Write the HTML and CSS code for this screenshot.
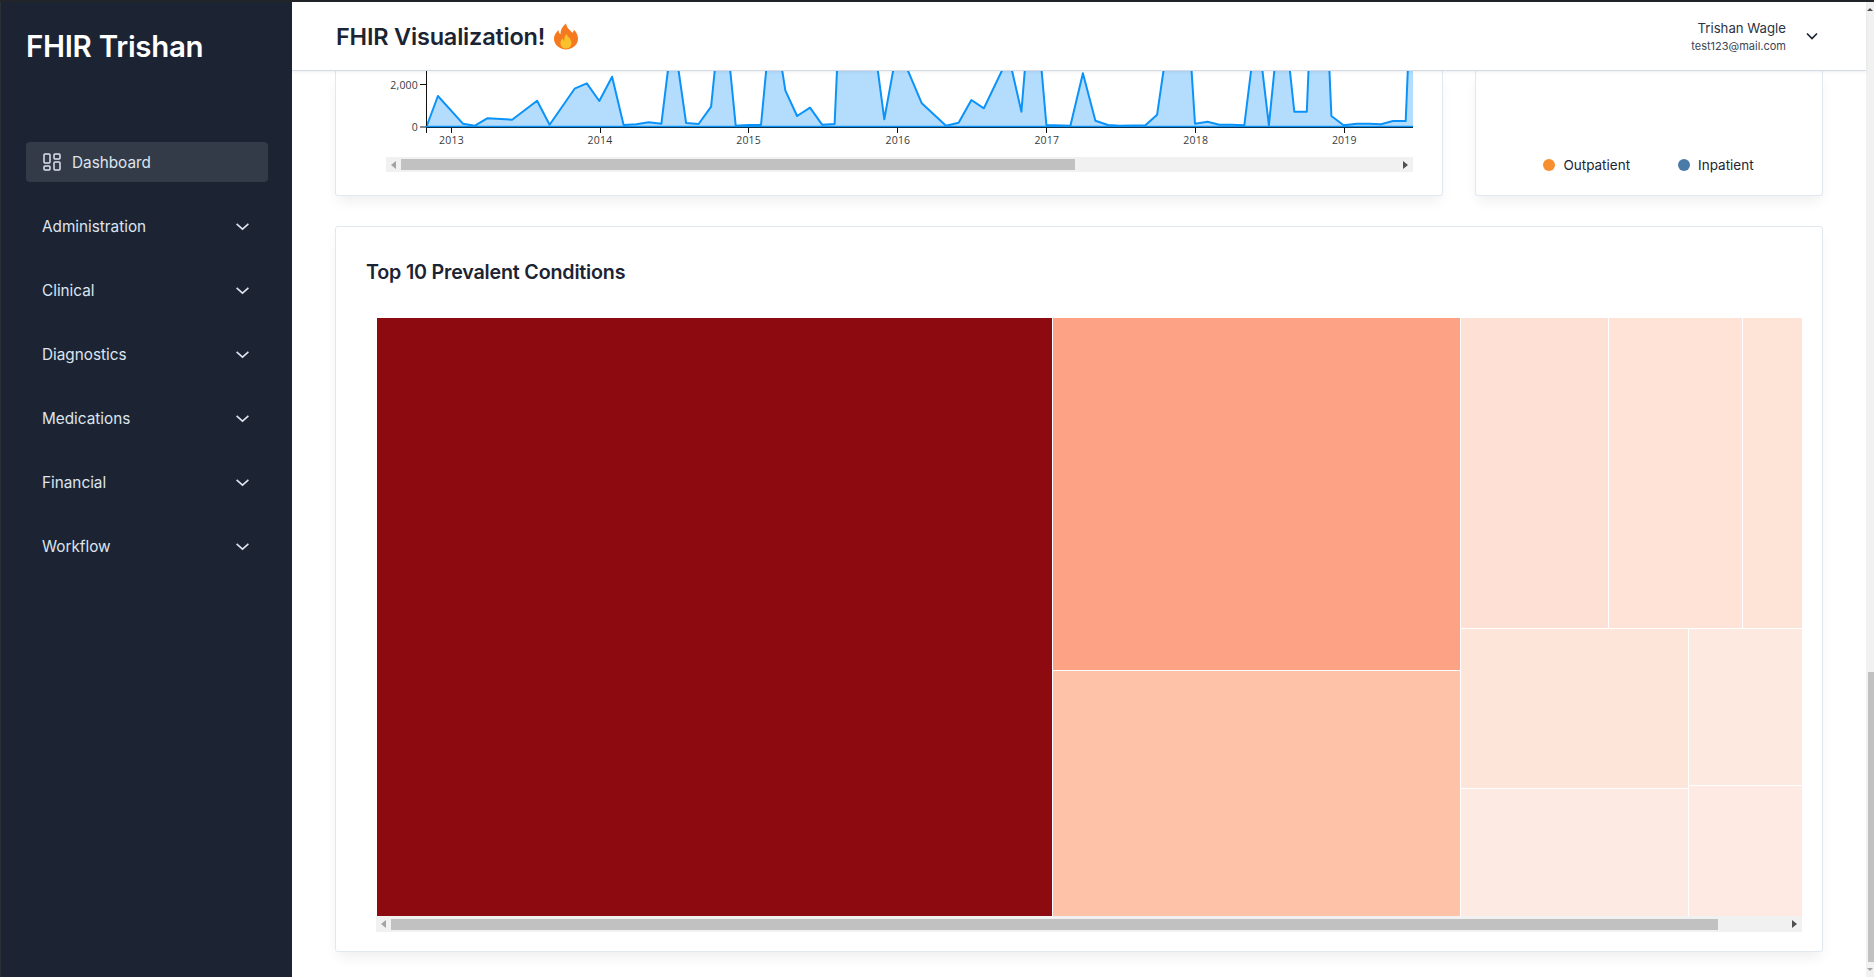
FILE: index.html
```html
<!DOCTYPE html>
<html>
<head>
  <title>FHIR Trishan</title>
  <link rel="stylesheet" href="styles.css">
</head>
<body>
  <div class="topline"></div>
  <div class="app">
    <aside class="sidebar">
      <div class="logo">FHIR Trishan</div>
      <nav class="nav">
        <a class="nav-item active">
          <svg class="nav-icon" viewBox="0 0 18 18" width="18" height="18" fill="none" stroke="#dee4ee" stroke-width="1.5">
            <rect x="1" y="1" width="6" height="9" rx="1"/>
            <rect x="11" y="1" width="6" height="5" rx="1"/>
            <rect x="1" y="13" width="6" height="4" rx="1"/>
            <rect x="11" y="9" width="6" height="8" rx="1"/>
          </svg>
          Dashboard
        </a>
        <a class="nav-item">Administration
          <svg class="chev" viewBox="0 0 14 14" width="15" height="15" fill="none" stroke="#dee4ee" stroke-width="1.500"><path d="M1.500 4.500l5.500 5 5.500-5"/></svg>
        </a>
        <a class="nav-item">Clinical
          <svg class="chev" viewBox="0 0 14 14" width="15" height="15" fill="none" stroke="#dee4ee" stroke-width="1.500"><path d="M1.500 4.500l5.500 5 5.500-5"/></svg>
        </a>
        <a class="nav-item">Diagnostics
          <svg class="chev" viewBox="0 0 14 14" width="15" height="15" fill="none" stroke="#dee4ee" stroke-width="1.500"><path d="M1.500 4.500l5.500 5 5.500-5"/></svg>
        </a>
        <a class="nav-item">Medications
          <svg class="chev" viewBox="0 0 14 14" width="15" height="15" fill="none" stroke="#dee4ee" stroke-width="1.500"><path d="M1.500 4.500l5.500 5 5.500-5"/></svg>
        </a>
        <a class="nav-item">Financial
          <svg class="chev" viewBox="0 0 14 14" width="15" height="15" fill="none" stroke="#dee4ee" stroke-width="1.500"><path d="M1.500 4.500l5.500 5 5.500-5"/></svg>
        </a>
        <a class="nav-item">Workflow
          <svg class="chev" viewBox="0 0 14 14" width="15" height="15" fill="none" stroke="#dee4ee" stroke-width="1.500"><path d="M1.500 4.500l5.500 5 5.500-5"/></svg>
        </a>
      </nav>
    </aside>

    <div class="main">
      <header class="header">
        <h1 class="page-title">FHIR Visualization!</h1>
        <svg class="flame" viewBox="0 0 26 28" width="24" height="27">
          <path d="M13 0c1 5 4 7 7 10 1-1 1.500-2 1.500-3.500C24.500 10 26 13 26 16.500 26 23 20 28 13 28S0 23 0 16.500C0 12 3 9 5 7c0 2 .5 3.500 2 4.500C7 7 9 3 13 0z" fill="#f4791f"/>
          <path d="M13.500 11c.5 3 5.500 5 5.500 10 0 3.500-2.700 6-6 6s-6-2.500-6-6c0-2.500 1.500-4 2.500-5 .2 1.300.7 2 1.500 2.500 0-3 1-5.500 2.500-7.500z" fill="#fbc02d"/>
        </svg>
        <div class="user">
          <div class="user-text">
            <div class="user-name">Trishan Wagle</div>
            <div class="user-mail">test123@mail.com</div>
          </div>
          <svg class="user-chev" viewBox="0 0 14 14" width="14" height="14" fill="none" stroke="#1c2434" stroke-width="1.700"><path d="M2 4.500l5 5 5-5"/></svg>
        </div>
      </header>

      <div class="content">
        <div class="row">
          <section class="card chart-card">
            <svg class="area-chart" viewBox="336 71 1106 86" width="1106" height="86">
              <polygon class="area" points="426.400,127 437.900,96 462.900,123.700 475,125.700 487.100,118.300 512.100,119.700 537.100,100.700 549.600,124.700 574.600,88.700 586.800,83.300 599.300,101 612.100,76.700 623.600,125 636.400,124.300 648.600,122.300 661.400,123.700 668.200,68 678.200,68 686.100,123 698.600,124 711.100,106.700 715,68 730,68 735.700,125.700 748.600,125 761,125 766.400,68 781.800,68 785.400,90.700 797.100,116 810,107.700 822.100,124.700 834.600,124 837.100,68 877.500,68 884.300,119.300 893.600,68 906.800,68 921.800,103.300 946,125.700 958.600,122.700 971.400,100 983.900,108.300 1003.200,68 1011.400,68 1021.400,111.700 1025,68 1041.400,68 1046.400,125 1070.400,125.700 1082.900,73.300 1095.400,120.700 1107.900,125 1120,125.700 1145.400,125.300 1157.100,114.700 1163.900,68 1191.400,68 1195,123.700 1207.500,121.700 1219.300,124.700 1231.800,124.700 1244.300,125.300 1251.400,68 1262.100,68 1268.900,125.300 1274.600,68 1289.600,68 1294.300,111.700 1306.800,111.700 1308.600,68 1329.300,68 1331.400,116 1343.600,125.300 1356.800,123.700 1369.300,123.700 1381,124.300 1392.900,121 1405.700,121 1407.900,68 1413,68 1413,127"/>
              <polyline class="line" points="426.400,127 437.900,96 462.900,123.700 475,125.700 487.100,118.300 512.100,119.700 537.100,100.700 549.600,124.700 574.600,88.700 586.800,83.300 599.300,101 612.100,76.700 623.600,125 636.400,124.300 648.600,122.300 661.400,123.700 668.200,68 678.200,68 686.100,123 698.600,124 711.100,106.700 715,68 730,68 735.700,125.700 748.600,125 761,125 766.400,68 781.800,68 785.400,90.700 797.100,116 810,107.700 822.100,124.700 834.600,124 837.100,68 877.500,68 884.300,119.300 893.600,68 906.800,68 921.800,103.300 946,125.700 958.600,122.700 971.400,100 983.900,108.300 1003.200,68 1011.400,68 1021.400,111.700 1025,68 1041.400,68 1046.400,125 1070.400,125.700 1082.900,73.300 1095.400,120.700 1107.900,125 1120,125.700 1145.400,125.300 1157.100,114.700 1163.900,68 1191.400,68 1195,123.700 1207.500,121.700 1219.300,124.700 1231.800,124.700 1244.300,125.300 1251.400,68 1262.100,68 1268.900,125.300 1274.600,68 1289.600,68 1294.300,111.700 1306.800,111.700 1308.600,68 1329.300,68 1331.400,116 1343.600,125.300 1356.800,123.700 1369.300,123.700 1381,124.300 1392.900,121 1405.700,121 1407.900,68"/>
              <path class="axis" d="M426.500 68V133M420 84.500h6M420 127h6M426 127.500H1413M451.500 127v6M600.500 127v6M748.500 127v6M897.500 127v6M1046.500 127v6M1195.500 127v6M1344.500 127v6"/>
              <line class="baseline" x1="426" y1="126.500" x2="1413" y2="126.500"/>
              <text class="ylabel" x="418" y="88.500">2,000</text>
              <text class="ylabel" x="418" y="131">0</text>
              <text class="xlabel" x="451.500" y="143.500">2013</text>
              <text class="xlabel" x="600" y="143.500">2014</text>
              <text class="xlabel" x="748.600" y="143.500">2015</text>
              <text class="xlabel" x="897.900" y="143.500">2016</text>
              <text class="xlabel" x="1046.800" y="143.500">2017</text>
              <text class="xlabel" x="1195.700" y="143.500">2018</text>
              <text class="xlabel" x="1344.300" y="143.500">2019</text>
            </svg>
            <div class="hbar chart-bar">
              <span class="arrow left"></span>
              <span class="thumb chart-thumb"></span>
              <span class="spacer"></span>
              <span class="arrow right"></span>
            </div>
          </section>
          <section class="card legend-card">
            <div class="legend">
              <span class="legend-item"><i class="dot orange"></i>Outpatient</span>
              <span class="legend-item"><i class="dot blue"></i>Inpatient</span>
            </div>
          </section>
        </div>

        <section class="card map-card">
          <h2 class="card-title">Top 10 Prevalent Conditions</h2>
          <div class="treemap">
            <div class="cell t1"></div>
            <div class="map-col col-b">
              <div class="cell t2"></div>
              <div class="cell t3"></div>
            </div>
            <div class="map-col col-c">
              <div class="map-row top-row">
                <div class="cell t4 w-a"></div>
                <div class="cell t5 w-b"></div>
                <div class="cell t6 w-c"></div>
              </div>
              <div class="map-row low-row">
                <div class="map-col low-a">
                  <div class="cell t7 h-a"></div>
                  <div class="cell t8 h-b"></div>
                </div>
                <div class="map-col low-b">
                  <div class="cell t9 h-c"></div>
                  <div class="cell t10 h-d"></div>
                </div>
              </div>
            </div>
          </div>
          <div class="hbar map-bar">
            <span class="arrow left"></span>
            <span class="thumb map-thumb"></span>
            <span class="spacer"></span>
            <span class="arrow right"></span>
          </div>
        </section>
      </div>
    </div>

    <div class="vbar">
      <span class="arrow up"></span>
      <span class="vspace"></span>
      <span class="vthumb"></span>
      <span class="arrow down"></span>
    </div>
  </div>
</body>
</html>
```

FILE: styles.css
```css
* { box-sizing: border-box; }
html, body { margin: 0; height: 100%; overflow: hidden; }
body { font-family: Inter, "Noto Sans", sans-serif; background: #fff; color: #1c2434; }

.topline { height: 2px; background: #212529; }
.app { display: flex; height: 975px; }

/* sidebar */
.sidebar {
  width: 292px;
  flex: none;
  background: #1c2434;
  border-left: 1px solid #2b2f36;
  padding: 0 24px 0 25px;
}
.logo {
  height: 140px;
  padding: 25px 0 0 0;
  font-size: 29.500px;
  line-height: 39px;
  font-weight: 600;
  letter-spacing: -0.3px;
  color: #fff;
}
.nav { display: flex; flex-direction: column; gap: 24px; }
.nav-item {
  height: 40px;
  display: flex;
  align-items: center;
  padding: 0 18px 0 16px;
  justify-content: space-between;
  border-radius: 4px;
  font-size: 15.300px;
  font-weight: 400;
  color: #dee4ee;
}
.nav-item.active { background: #333a48; justify-content: flex-start; gap: 11px; padding-left: 17px; }
.nav-icon { flex: none; }

/* header */
.main { flex: 1; min-width: 0; display: flex; flex-direction: column; }
.header {
  height: 69px;
  flex: none;
  display: flex;
  align-items: center;
  padding: 0 44px;
  background: #fff;
  border-bottom: 1px solid #d5dbe6;
  box-shadow: 0 1px 3px rgba(28, 36, 52, 0.08);
  position: relative;
  z-index: 2;
}
.page-title { margin: 2px 0 0; font-size: 23.500px; line-height: 30px; font-weight: 600; letter-spacing: -0.2px; }
.flame { margin-left: 9px; }
.user { margin-left: auto; display: flex; align-items: center; gap: 19px; margin-right: 3px; }
.user-text { text-align: right; }
.user-name { font-size: 13.200px; line-height: 18px; font-weight: 400; color: #2b3344; }
.user-mail { font-size: 11px; line-height: 16px; padding-top: 1px; color: #3c4454; }

/* cards */
.content { flex: 1; min-height: 0; padding: 0 43px; }
.row { display: grid; grid-template-columns: 1108px 348px; gap: 32px; height: 125px; margin-bottom: 30px; }
.card {
  background: #fff;
  border: 1px solid #e2e8f0;
  border-radius: 3px;
  box-shadow: 0 8px 13px -3px rgba(0, 0, 0, 0.07);
}
.chart-card, .legend-card { border-top: 0; border-top-left-radius: 0; border-top-right-radius: 0; display: flex; flex-direction: column; justify-content: flex-end; overflow: hidden; }
.area-chart { display: block; flex: none; }
.area { fill: #b3dcfd; stroke: none; }
.line { fill: none; stroke: #0b93fa; stroke-width: 2; stroke-linejoin: round; }
.axis { fill: none; stroke: #111; stroke-width: 1; }
.baseline { stroke: #0b93fa; stroke-width: 1.500; }
.ylabel, .xlabel { font-family: "Open Sans", sans-serif; font-size: 10.500px; letter-spacing: 0.2px; fill: #373d3f; }
.ylabel { text-anchor: end; }
.xlabel { text-anchor: middle; }

.legend { display: flex; justify-content: center; gap: 48px; margin: 0 0 20px; padding-right: 1px; }
.legend-item { display: flex; align-items: center; gap: 8px; font-size: 13.500px; line-height: 20px; font-weight: 400; color: #1c2434; }
.dot { width: 12px; height: 12px; border-radius: 50%; }
.orange { background: #f78f2e; }
.blue { background: #4a7aa8; }

/* fake scrollbars from the chart library */
.hbar { display: flex; align-items: center; height: 15px; background: #f1f1f1; flex: none; }
.chart-bar { margin: 0 29px 23px 50px; height: 15px; }
.map-bar { margin: 0 0 0 10px; height: 16px; }
.thumb { height: 11px; background: #c1c1c1; flex: none; }
.chart-thumb { width: 674px; }
.map-thumb { width: 1327px; }
.spacer { flex: 1; }
.arrow { width: 15px; flex: none; display: flex; justify-content: center; }
.arrow::before { content: ""; border: 4px solid transparent; }
.arrow.left::before { border-left: 0; border-right: 5px solid #a3a3a3; }
.arrow.right::before { border-right: 0; border-left: 5px solid #505050; }

.map-card { height: 726px; padding: 33px 20px 0 30px; }
.card-title { margin: 0 0 34px; font-size: 19.700px; line-height: 24px; font-weight: 600; letter-spacing: -0.2px; }
.treemap { display: flex; gap: 1px; height: 598px; margin-left: 11px; background: #fff; }
.cell { min-width: 0; }
.t1 { width: 675px; background: #8d0b10; flex: none; }
.map-col { display: flex; flex-direction: column; gap: 1px; flex: none; }
.map-row { display: flex; gap: 1px; }
.col-b { width: 407px; }
.col-b .t2 { height: 352px; background: #fda285; }
.col-b .t3 { height: 245px; background: #fec2a9; }
.col-c { width: 341px; }
.top-row { height: 310px; }
.low-row { height: 287px; }
.w-a { width: 147px; }
.w-b { width: 133px; }
.w-c { width: 59px; }
.low-a { width: 227px; }
.low-b { width: 113px; }
.h-a { height: 159px; }
.h-b { height: 127px; }
.h-c { height: 156px; }
.h-d { height: 130px; }
.t4 { background: #fee0d4; }
.t5 { background: #fee3d6; }
.t6 { background: #fee4d7; }
.t7 { background: #fee5da; }
.t8 { background: #fdeae2; }
.t9 { background: #fee9e0; }
.t10 { background: #feeae2; }

/* page scrollbar */
.vbar { width: 8px; flex: none; background: #f1f1f1; display: flex; flex-direction: column; align-items: flex-end; }
.vbar .arrow { height: 15px; width: 8px; align-items: center; }
.vbar .arrow::before { border-width: 3px; }
.arrow.up::before { border-top: 0; border-bottom: 3px solid #505050; }
.arrow.down::before { border-bottom: 0; border-top: 3px solid #a3a3a3; }
.vspace { flex: 1; }
.vthumb { width: 6px; height: 290px; background: #c1c1c1; }
```
